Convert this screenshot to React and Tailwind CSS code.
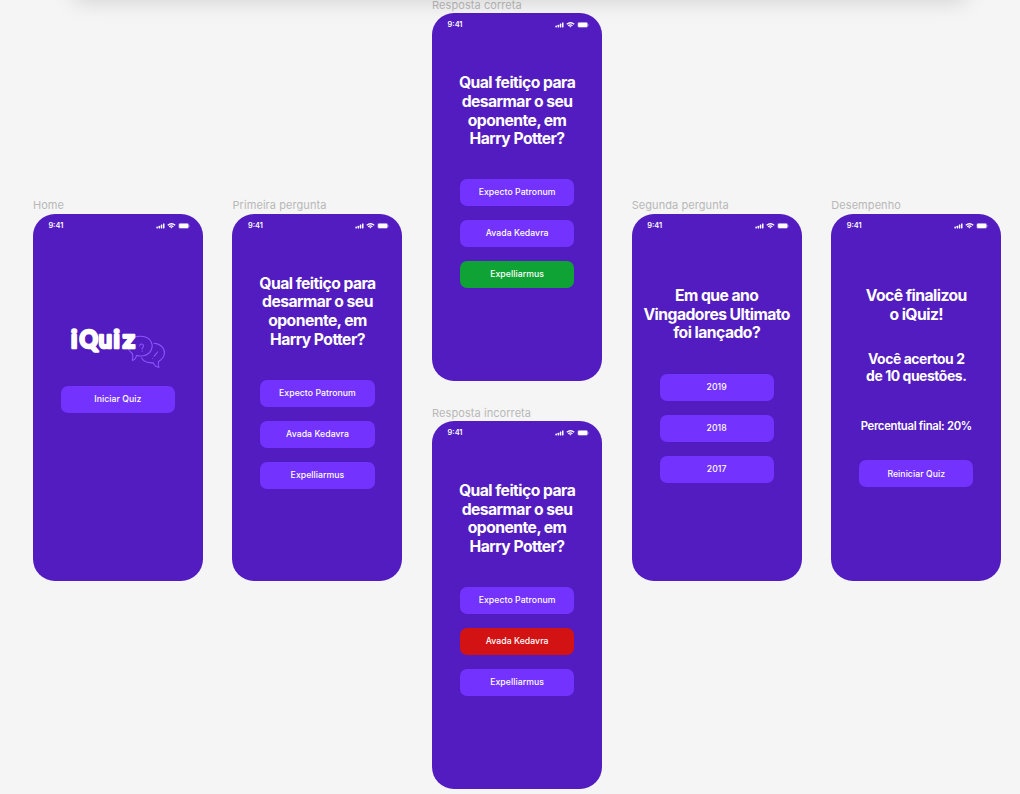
import React from "react";

function StatusBar() {
  return (
    <div className="flex h-[23px] items-center justify-between pt-px pr-[13px] pl-[15.5px] text-white">
      <span className="text-[7.4px] leading-[10px] font-semibold">9:41</span>
      <svg width="34" height="8" viewBox="0 0 34 8" fill="currentColor">
        <rect x="0.4" y="4.6" width="1.5" height="1.8" rx="0.4" />
        <rect x="2.6" y="3.8" width="1.5" height="2.6" rx="0.4" />
        <rect x="4.8" y="2.6" width="1.5" height="3.8" rx="0.4" />
        <rect x="7" y="1.4" width="1.5" height="5" rx="0.4" />
        <path d="M11.8 3.3q3.7-3.1 7.4 0M13.2 4.7q2.1-1.7 4.2 0" fill="none" stroke="currentColor" strokeWidth="1.3" />
        <path d="M14.2 5.3q1.1-.8 2.2 0l-1.1 1.3z" />
        <rect x="22.4" y="1" width="10.6" height="5.8" rx="1.7" opacity="0.4" />
        <rect x="23.1" y="1.7" width="9.2" height="4.4" rx="1" />
        <rect x="33.2" y="3.1" width="0.6" height="1.6" rx="0.3" opacity="0.5" />
      </svg>
    </div>
  );
}

function Phone({ name, children }) {
  return (
    <section className="w-[170px] shrink-0">
      <h2 className="h-[13.3px] text-[11px] leading-[11px] font-normal tracking-[0.07px] whitespace-nowrap text-[#b8b8b8]">{name}</h2>
      <div className="h-[367.6px] rounded-[22px] bg-[#521cc0] text-center text-white">
        <StatusBar />
        {children}
      </div>
    </section>
  );
}

const tones = { violet: "bg-[#7432ff]", green: "bg-[#0fa234]", red: "bg-[#d31213]" };

function Button({ tone = "violet", children }) {
  return (
    <button className={"mx-auto flex h-[27px] w-[114.3px] items-center justify-center rounded-[7px] pt-[0.5px] text-[8.7px] font-[550] tracking-[0.05px] whitespace-nowrap " + tones[tone]}>
      {children}
    </button>
  );
}

function Title({ lines }) {
  return (
    <h1 className="text-[15.7px] leading-[18.7px] font-[650] tracking-[-0.54px] whitespace-nowrap">
      {lines.map((line) => <span key={line} className="block">{line}</span>)}
    </h1>
  );
}

function Answers({ items }) {
  return (
    <div className="flex flex-col gap-[14px]">
      {items.map(([label, tone]) => <Button key={label} tone={tone}>{label}</Button>)}
    </div>
  );
}

function SpellQuestion({ name, second, third }) {
  return (
    <Phone name={name}>
      <div className="h-[37.9px]" />
      <Title lines={["Qual feitiço para", "desarmar o seu", "oponente, em", "Harry Potter?"]} />
      <div className="h-[30.2px]" />
      <Answers items={[["Expecto Patronum"], ["Avada Kedavra", second], ["Expelliarmus", third]]} />
    </Phone>
  );
}

function Logo() {
  return (
    <svg className="mx-auto block" width="100" height="50" viewBox="0.5 0.5 100 50">
      <g fill="none" stroke="#8c55ff" strokeWidth="1.1" strokeLinejoin="round" strokeLinecap="round">
        <path d="M64 19.5C68 16 78 15.5 82.500 20.5C87 26.5 84 34.5 76 36.2C73.5 36.7 71 36.5 69 36C68.5 38.5 67 40.5 64.8 41C65.500 39 65.5 36.5 65 34.2C62 32 60.3 29.5 60.3 25.5" />
        <path d="M86.5 23.8C93 24.2 97.500 29 96.9 34C96.5 37.5 94.5 40 91 42C90.5 44 90.7 46 91.5 47.8C88.5 47.2 86.5 45.5 86 43.3C81 43.8 76.5 42.3 74 38.5" />
        <path d="M72.2 26.2C72.5 23.9 76 24 76 26.6C76 28.3 74.3 28.1 74.500 29.7M74.7 31.6v.1M90 32.5l-3.3 4.2M85 38.7v.1" />
      </g>
      <g className="fill-white text-[24px] font-semibold" stroke="#fff" strokeWidth="2.7" strokeLinejoin="round">
        <text x="3.6" y="28.4">i</text>
        <text x="12" y="28.4" textLength="18.5" lengthAdjust="spacingAndGlyphs" className="font-['Lato'] text-[24px] font-bold">Q</text>
        <text x="31.1" y="28.4" textLength="13.6" lengthAdjust="spacingAndGlyphs">u</text>
        <text x="46" y="28.4">i</text>
        <text x="54.6" y="28.4">z</text>
      </g>
    </svg>
  );
}

export default function App() {
  return (
    <main className="relative flex h-[794px] w-[1020px] gap-[29.6px] overflow-hidden bg-[#f5f5f5] pl-[32.9px] font-['Inter',sans-serif]">
      <div className="absolute -top-[40px] left-[74px] h-[40px] w-[892px] shadow-[0_1px_22px_rgba(0,0,0,0.15)]" />
      <div className="pt-[200.4px]">
        <Phone name="Home">
          <div className="h-[83.3px]" />
          <Logo />
          <div className="h-[16.2px]" />
          <Button>Iniciar Quiz</Button>
        </Phone>
      </div>
      <div className="pt-[200.4px]">
        <SpellQuestion name="Primeira pergunta" />
      </div>
      <div className="flex flex-col gap-[26.8px]">
        <SpellQuestion name="Resposta correta" third="green" />
        <SpellQuestion name="Resposta incorreta" second="red" />
      </div>
      <div className="pt-[200.4px]">
        <Phone name="Segunda pergunta">
          <div className="h-[50.4px]" />
          <Title lines={["Em que ano", "Vingadores Ultimato", "foi lançado?"]} />
          <div className="h-[30.4px]" />
          <Answers items={[["2019"], ["2018"], ["2017"]]} />
        </Phone>
      </div>
      <div className="pt-[200.4px]">
        <Phone name="Desempenho">
          <div className="h-[50.4px]" />
          <Title lines={["Você finalizou", "o iQuiz!"]} />
          <p className="mt-[27px] text-[13.9px] leading-[16.7px] font-[650] tracking-[-0.42px]">Você acertou 2<br />de 10 questões.</p>
          <p className="mt-[34px] text-[11.3px] leading-[14px] font-semibold tracking-[-0.3px]">Percentual final: 20%</p>
          <div className="h-[27.5px]" />
          <Button>Reiniciar Quiz</Button>
        </Phone>
      </div>
    </main>
  );
}
